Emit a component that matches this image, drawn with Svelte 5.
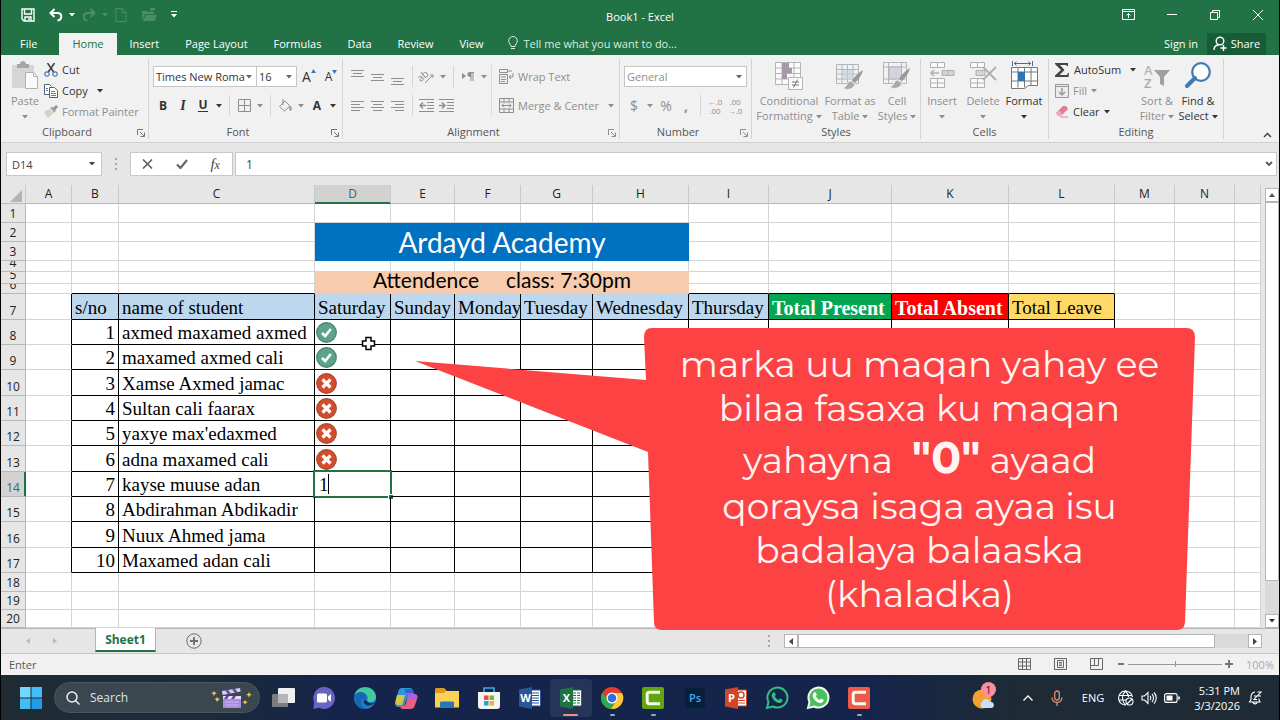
<script>
  const tabs = ["File", "Home", "Insert", "Page Layout", "Formulas", "Data", "Review", "View"];

  const columns = [
    { name: "A", width: 46 },
    { name: "B", width: 47, head: "s/no", tone: "blue" },
    { name: "C", width: 196, head: "name of student", tone: "blue" },
    { name: "D", width: 76, head: "Saturday", tone: "blue" },
    { name: "E", width: 64, head: "Sunday", tone: "blue" },
    { name: "F", width: 66, head: "Monday", tone: "blue" },
    { name: "G", width: 72, head: "Tuesday", tone: "blue" },
    { name: "H", width: 96, head: "Wednesday", tone: "blue" },
    { name: "I", width: 80, head: "Thursday", tone: "blue" },
    { name: "J", width: 123, head: "Total Present", tone: "green" },
    { name: "K", width: 117, head: "Total Absent", tone: "red" },
    { name: "L", width: 106, head: "Total Leave", tone: "gold" },
    { name: "M", width: 60 },
    { name: "N", width: 60 },
    { name: "", width: 0 },
  ];

  const heights = [19, 19, 19, 11, 12, 10, 26, 25, 25, 26, 25, 25, 26, 25, 25, 26, 25, 19, 18, 18];

  const students = [
    { name: "axmed maxamed axmed", mark: "yes" },
    { name: "maxamed axmed cali", mark: "yes" },
    { name: "Xamse Axmed jamac", mark: "no" },
    { name: "Sultan cali faarax", mark: "no" },
    { name: "yaxye max'edaxmed", mark: "no" },
    { name: "adna maxamed cali", mark: "no" },
    { name: "kayse muuse adan", mark: "edit" },
    { name: "Abdirahman Abdikadir" },
    { name: "Nuux Ahmed jama" },
    { name: "Maxamed adan cali" },
  ];

  const apps = [
    "Task view", "Chat", "Edge", "Copilot", "Explorer", "Store", "Word", "Excel",
    "Chrome", "Camtasia", "Photoshop", "PowerPoint", "WhatsApp", "WhatsApp Beta", "Recorder",
  ];

  let cellValue = "1";
  let zoom = 50;

  // D:H is merged over rows 2-3 and 5-6
  function merged(row, col) {
    return col >= 3 && col <= 7 && [2, 3, 5, 6].includes(row);
  }

  function boxed(row, col) {
    return row >= 7 && row <= 17 && col >= 1 && col <= 11;
  }

  function cellClass(row, col) {
    const list = [];
    if (boxed(row, col) || boxed(row, col + 1)) list.push("right");
    if (boxed(row, col) || boxed(row + 1, col)) list.push("bottom");
    if (row === 7 && columns[col].tone) list.push("head", columns[col].tone);
    return list.join(" ");
  }
</script>

{#snippet caret()}
  <svg class="caret" width="6" height="4" viewBox="0 0 6 4"><path d="M0 0h6L3 3.5z" fill="currentColor" /></svg>
{/snippet}

{#snippet launcher()}
  <svg class="launcher" width="8" height="8" viewBox="0 0 8 8" fill="none" stroke="currentColor">
    <path d="M.5 6V.5H6M3 3l4 4M7.500 3.500v4h-4" />
  </svg>
{/snippet}

{#snippet lines(rows, top)}
  <svg width="14" height="16" viewBox="0 0 14 16" stroke="currentColor">
    {#each rows as [x1, x2], i}
      <path d="M{x1} {top + i * 3 + 0.5}H{x2}" />
    {/each}
  </svg>
{/snippet}

{#snippet mark(kind)}
  <svg class="mark" width="21" height="21" viewBox="0 0 21 21">
    {#if kind === "yes"}
      <circle cx="10.500" cy="10.500" r="9.800" fill="#5ba389" stroke="#47806d" stroke-width="1.200" />
      <path d="M6 11l3.200 3 5.600-7" fill="none" stroke="#fff" stroke-width="2.600" />
    {:else}
      <circle cx="10.500" cy="10.500" r="9.800" fill="#d24d2c" stroke="#a8492f" stroke-width="1.200" />
      <path d="M6.500 6.500l8 8M14.500 6.500l-8 8" stroke="#fff" stroke-width="3.200" />
    {/if}
  </svg>
{/snippet}

{#snippet appIcon(name)}
  <svg width="24" height="24" viewBox="0 0 24 24">
    {#if name === "Task view"}
      <rect x="7" y="2" width="17" height="15" rx="1" fill="#eef0f1" />
      <rect x="1" y="8" width="16" height="13" rx="1" fill="#7b7e80" />
      <path d="M7 8h10v9H7z" fill="#b4b6b7" />
    {:else if name === "Chat"}
      <path d="M12 1a11 11 0 1 1-5 20.800L1.500 23 2 16A11 11 0 0 1 12 1z" fill="#6a63c4" />
      <rect x="5" y="7.500" width="10" height="9" rx="1.500" fill="#fff" />
      <path d="M16 10.500l3-2.500v8l-3-2.500z" fill="#fff" />
    {:else if name === "Edge"}
      <circle cx="12" cy="12" r="11" fill="#1b7fd3" />
      <path d="M1.500 9C4-1 22-2 23 11c0 5-6 6-9 4 3-5-3-9-7-8-3 0-5 1-5.500 2z" fill="#43c9a0" />
      <path d="M1.300 10C4 4 13 5 13.500 11c0 1-.7 2-1 3-3-2-5 1-4 4 1 3 4 4.500 6 4.800C7 24 0 18 1.300 10z" fill="#1668b5" />
      <path d="M13 14c2 4 7 4 9 2-2 4-9 5-11 1-1-1.500 0-3 2-3z" fill="#122b56" />
    {:else if name === "Copilot"}
      <path d="M8 2h8c2 0 2.500 1 3 3l1 3h-6l-3 10c-.7 2-1.500 3-4 3H5c-3 0-4.500-2-3.500-5L4 6c.8-2.500 1.700-4 4-4z" fill="#2f95d8" />
      <path d="M3 9l-1.500 6c-.6 3 .5 4 2.500 4h4l3-10z" fill="#d4c644" />
      <path d="M16 3h-6l2 4h8l-.7-2C18.800 3.500 18 3 16 3z" fill="#2868c7" />
      <path d="M14 8h6c3 0 4 2 3 5l-2 6c-.8 2.500-2 4-4.500 4H9c-2 0-2.700-1.500-3-3h3c2 0 2.400-1 3-3z" fill="#e9607c" />
      <path d="M14 8h6c3 0 4 2 3 5h-10z" fill="#b65be0" />
    {:else if name === "Explorer"}
      <path d="M0 3.500C0 2.500.7 2 1.500 2H9l3 3h10.500c.8 0 1.500.7 1.500 1.500V12H0z" fill="#d99b24" />
      <path d="M0 7h9l2-2h13v16.500H0z" fill="#fbd155" />
      <path d="M5 22v-5c0-1 .6-1.500 1.500-1.500h11c1 0 1.500.5 1.500 1.500v5z" fill="#2877b8" />
    {:else if name === "Store"}
      <path d="M7 7V2h10v5" fill="none" stroke="#38aee3" stroke-width="1.600" />
      <path d="M1 6h22v14q0 3-3 3H4q-3 0-3-3z" fill="#f4f4f2" />
      <path d="M7 9.500h4.500V14H7z" fill="#e2562f" />
      <path d="M12.500 9.500H17V14h-4.500z" fill="#78b538" />
      <path d="M7 15h4.500v4.500H7z" fill="#2a9fd8" />
      <path d="M12.500 15H17v4.500h-4.500z" fill="#f0b429" />
    {:else if name === "Word" || name === "Excel" || name === "PowerPoint"}
      {@const tone = name === "Word" ? "#2b579a" : name === "Excel" ? "#207245" : "#d24726"}
      <path d="M12 4h10.500v16H12z" fill="#fff" stroke={tone} />
      {#if name === "PowerPoint"}
        <circle cx="17" cy="9" r="3" fill="none" stroke={tone} stroke-width="1.500" />
        <path d="M14 14.500h7M14 17h7" stroke={tone} />
      {:else}
        <path d="M14 7h7M14 9.500h7M14 12h7M14 14.500h7M14 17h7" stroke={tone} />
        {#if name === "Excel"}<path d="M17.500 5v14" stroke="#fff" />{/if}
      {/if}
      <path d="M1 3.500L14 1v22L1 20.500z" fill={tone} />
      <text x="7.500" y="16" text-anchor="middle" font-size="11" font-weight="700" fill="#fff">{name[0] === "E" ? "X" : name[0]}</text>
    {:else if name === "Chrome"}
      <circle cx="12" cy="12" r="11" fill="#e33b2e" />
      <path d="M2.500 6.500A11 11 0 0 0 11 23l5-9-8 0z" fill="#2da94f" />
      <path d="M22 7H12l4.500 7.500L11 23A11 11 0 0 0 22 7z" fill="#fcc934" />
      <circle cx="12" cy="12" r="5.500" fill="#fff" />
      <circle cx="12" cy="12" r="4.300" fill="#2f6fe0" />
    {:else if name === "Camtasia" || name === "Recorder"}
      <rect x="1" y="1" width="22" height="22" rx="2" fill={name === "Camtasia" ? "#61a60e" : "#f0584c"} />
      <path d="M19 6.200H8.500Q6.200 6.200 6.200 8.500v7q0 2.300 2.300 2.300H19" fill="none" stroke="#f3fbe9" stroke-width="3" />
    {:else if name === "Photoshop"}
      <rect x="2" y="2" width="20" height="20" rx="2" fill="#04203a" />
      <text x="12" y="16" text-anchor="middle" font-size="11" font-weight="600" fill="#42a9f5">Ps</text>
    {:else}
      {@const beta = name === "WhatsApp Beta"}
      <path d="M2 22l1.500-6A10 10 0 1 1 8 20.500z" fill={beta ? "#48c15d" : "#14264d"} stroke={beta ? "#f2f7f2" : "#36bd82"} stroke-width="2" />
      <path d="M8 6.500c1-.7 1.700-.3 2 .5l.8 1.700-1 1.500c1 2 2 3 4 3.800l1.300-1.400 2.400 1.200c.4 2-1.500 3.300-3 3.200C10 16.500 6 12 6.800 8.500z" fill={beta ? "#fff" : "#36bd82"} />
    {/if}
  </svg>
{/snippet}

<div class="screen">
  <header class="titlebar">
    <div class="quick">
      <button class="q save" aria-label="Save">
        <svg width="14" height="14" viewBox="0 0 14 14" fill="none" stroke="#fff" stroke-width="1.400"><path d="M1 1h12v12H3l-2-2zM3.500 1v5h7V1M4 13V9h6v4M8 10v2" /></svg>
      </button>
      <button class="q undo" aria-label="Undo">
        <svg width="14" height="14" viewBox="0 0 14 14" fill="none" stroke="#fff" stroke-width="2"><path d="M5.500 1L1.500 5l4 4M2 5h6.500c5 0 5 7 0 7.500" /></svg>
        <span>{@render caret()}</span>
      </button>
      <button class="q redo dim" aria-label="Redo">
        <svg width="14" height="14" viewBox="0 0 14 14" fill="none" stroke="currentColor" stroke-width="2"><path d="M8.500 1l4 4-4 4M12 5H5.500c-5 0-5 7 0 7.500" /></svg>
        <span>{@render caret()}</span>
      </button>
      <button class="q dim" aria-label="New">
        <svg width="12" height="14" viewBox="0 0 12 14" fill="none" stroke="currentColor"><path d="M1 .5h6L11 4.500v9H1zM7 .5v4h4" /></svg>
      </button>
      <button class="q folder dim" aria-label="Open">
        <svg width="16" height="14" viewBox="0 0 16 14" fill="currentColor"><path d="M1 13V3h5l1 1h6v2H4zM4.500 7H16l-2.500 6H2zM9 0h5v3h-1V1.500L10 4z" /></svg>
      </button>
      <button class="q more" aria-label="Customize">
        <svg width="6" height="7" viewBox="0 0 6 7" fill="#fff"><path d="M0 0h6v1H0zM0 3h6L3 6.500z" /></svg>
      </button>
    </div>
    <h1>Book1 - Excel</h1>
    <div class="window">
      <button aria-label="Ribbon display options">
        <svg width="13" height="11" viewBox="0 0 13 11" fill="none" stroke="#fff"><path d="M.5.5h12v10H.5zM.5 2.500h12M6.500 9V4.500M4.500 6.500l2-2 2 2" /></svg>
      </button>
      <button aria-label="Minimize"><svg width="10" height="10" viewBox="0 0 10 10" stroke="#fff"><path d="M0 4.500h10" /></svg></button>
      <button aria-label="Restore"><svg width="10" height="10" viewBox="0 0 10 10" fill="none" stroke="#fff"><path d="M.5 2.500h7v7h-7zM2.500 2V.5h7v7H8" /></svg></button>
      <button aria-label="Close"><svg width="10" height="10" viewBox="0 0 10 10" stroke="#fff"><path d="M0 0l10 10M10 0L0 10" /></svg></button>
    </div>
  </header>

  <nav class="tabs">
    {#each tabs as tab}
      <button class="tab" class:file={tab === "File"} class:active={tab === "Home"}>{tab}</button>
    {/each}
    <button class="tell">
      <svg width="10" height="14" viewBox="0 0 10 14" fill="none" stroke="#dcecdf"><path d="M3 10.500c0-2-2.300-3-2.300-5.700a4.300 4.300 0 0 1 8.600 0c0 2.700-2.300 3.700-2.300 5.700zM3 12.500h4" /></svg>
      Tell me what you want to do...
    </button>
    <button class="signin">Sign in</button>
    <button class="share">
      <svg width="14" height="15" viewBox="0 0 14 15" fill="none" stroke="#fff" stroke-width="1.400"><circle cx="7" cy="5" r="3.800" /><path d="M1 14c0-3 2-5 5-5.200M7.500 12h6M10.500 9v6" /></svg>
      Share
    </button>
  </nav>

  <section class="ribbon">
    <div class="group">
      <div class="body">
        <button class="big paste off">
          <svg width="28" height="30" viewBox="0 0 28 30"><path d="M1 4h22v23H1z" fill="#d6d5d8" /><path d="M6 3h3c0-4 6-4 6 0h3v4H6z" fill="#a6a6a8" /><path d="M14.500 11.500h8l4 4v12h-12z" fill="#fafafa" stroke="#b2b2b4" /><path d="M22.500 11.500v4h4" fill="none" stroke="#b2b2b4" /></svg>
          <span>Paste</span>
          <span>{@render caret()}</span>
        </button>
        <div class="stack">
          <button class="small">
            <svg width="14" height="14" viewBox="0 0 14 14" fill="none"><path d="M3.500 0L10 9.500M10.500 0L4 9.500" stroke="#444" stroke-width="1.600" /><circle cx="3" cy="11" r="2.200" stroke="#4a7ebb" stroke-width="1.200" /><circle cx="11" cy="11" r="2.200" stroke="#4a7ebb" stroke-width="1.200" /></svg>
            Cut
          </button>
          <button class="small">
            <svg width="14" height="14" viewBox="0 0 14 14" fill="#fff" stroke="#55606b"><path d="M.5.5h5l2 2v8h-7z" /><path d="M5.500 3.500h5l3 3v7h-8z" /><path d="M2 4.500h2M2 6.500h2M7 7.500h4M7 9.500h5M7 11.500h5" stroke="#4a7ebb" /></svg>
            Copy <span class="drop">{@render caret()}</span>
          </button>
          <button class="small off">
            <svg width="14" height="13" viewBox="0 0 14 13"><path d="M0 7l5-3 4 4-5 5z" fill="#d8cfc4" /><path d="M6 3l2-1.500 4 4L10 8z" fill="#aaa" /><path d="M9 3l3-3 2 2-3 3z" fill="#8f8f8f" /></svg>
            Format Painter
          </button>
        </div>
      </div>
      <footer class="wide">Clipboard {@render launcher()}</footer>
    </div>

    <div class="group">
      <div class="body two">
        <div class="row">
          <label class="combo font"><select aria-label="Font"><option>Times New Roma</option></select>{@render caret()}</label>
          <label class="combo size"><select aria-label="Font size"><option>16</option></select>{@render caret()}</label>
          <button class="t24 grow" aria-label="Increase font size">A<svg width="5" height="4" viewBox="0 0 5 4"><path d="M0 4h5L2.500 0z" fill="#3b78b8" /></svg></button>
          <button class="t20 shrink" aria-label="Decrease font size">A<svg width="5" height="4" viewBox="0 0 5 4"><path d="M0 0h5L2.500 4z" fill="#3b78b8" /></svg></button>
        </div>
        <div class="row marks">
          <button class="t20"><b>B</b></button>
          <button class="t20 italic"><b>I</b></button>
          <button class="t20 under"><b>U</b></button>
          <button class="t12" aria-label="Underline options">{@render caret()}</button>
          <i class="sep"></i>
          <button class="t20 off" aria-label="Borders"><svg width="13" height="13" viewBox="0 0 13 13" fill="none" stroke="currentColor"><path d="M.5.5h12v12H.5zM6.500 0v13M0 6.500h13" /></svg></button>
          <button class="t12 off" aria-label="Border options">{@render caret()}</button>
          <i class="sep"></i>
          <button class="t20 off" aria-label="Fill color"><svg width="14" height="14" viewBox="0 0 14 14" fill="none" stroke="currentColor"><path d="M1.500 7.500L7 2l5 5-5.500 5zM5 0v6" /><path d="M12.500 7.500v4" stroke-width="2" /></svg></button>
          <button class="t12 off" aria-label="Fill options">{@render caret()}</button>
          <button class="t20"><b>A</b></button>
          <button class="t12" aria-label="Font color options">{@render caret()}</button>
        </div>
      </div>
      <footer class="wide">Font {@render launcher()}</footer>
    </div>

    <div class="group">
      <div class="body off">
        <div class="align">
          <div class="row">
            <button class="t20" aria-label="Top align">{@render lines([[0, 13], [2, 11], [0, 13]], 1)}</button>
            <button class="t20" aria-label="Middle align">{@render lines([[0, 13], [2, 11], [0, 13]], 5)}</button>
            <button class="t20" aria-label="Bottom align">{@render lines([[0, 13], [2, 11], [0, 13]], 9)}</button>
            <i class="sep"></i>
            <button class="t20" aria-label="Orientation"><svg class="tilt" width="16" height="15" viewBox="0 0 16 15"><text x="0" y="11" font-size="10" transform="rotate(-40 4 10)" fill="currentColor">ab</text><path d="M6 14l8-8M14 9V6h-3" fill="none" stroke="currentColor" /></svg></button>
            <button class="t12" aria-label="Orientation options">{@render caret()}</button>
            <i class="sep"></i>
            <button class="t20" aria-label="Text direction"><svg width="12" height="9" viewBox="0 0 12 9" fill="currentColor"><path d="M0 1l4 3-4 3zM8 0h4v1h-.5v8h-1V1h-1v8h-1V5C4.500 5 4.500 0 8 0z" /></svg></button>
            <button class="t12" aria-label="Direction options">{@render caret()}</button>
          </div>
          <div class="row">
            <button class="t20" aria-label="Align left">{@render lines([[0, 13], [0, 9], [0, 13], [0, 9]], 3)}</button>
            <button class="t20" aria-label="Center">{@render lines([[0, 13], [2, 11], [0, 13], [2, 11]], 3)}</button>
            <button class="t20" aria-label="Align right">{@render lines([[0, 13], [4, 13], [0, 13], [4, 13]], 3)}</button>
            <i class="sep"></i>
            <button class="t20" aria-label="Decrease indent"><svg width="16" height="14" viewBox="0 0 16 14" fill="none" stroke="currentColor"><path d="M0 .5h15M8 3.500h7M8 6.500h7M8 9.500h7M0 12.500h15" /><path d="M7 6.500H1M4 3.500l-3 3 3 3" stroke-width="1.500" /></svg></button>
            <button class="t20" aria-label="Increase indent"><svg width="16" height="14" viewBox="0 0 16 14" fill="none" stroke="currentColor"><path d="M0 .5h15M8 3.500h7M8 6.500h7M8 9.500h7M0 12.500h15" /><path d="M0 6.500h6M3 3.500l3 3-3 3" stroke-width="1.500" /></svg></button>
          </div>
        </div>
        <div class="wrap">
          <button class="small">
            <svg width="15" height="15" viewBox="0 0 15 15" fill="none" stroke="currentColor"><path d="M.5.5h8v3h-8zM9 2h4M.5 5.500h8v9h-8zM2 8h5M2 10.500h5M2 12.500h4M14 4v4h-4M12 6l-2 2 2 2" /></svg>
            Wrap Text
          </button>
          <button class="small">
            <svg width="15" height="15" viewBox="0 0 15 15" fill="none" stroke="currentColor"><path d="M.5.5h14v14H.5zM.5 4h14M.5 11h14M5 .5V4M10 .5V4M5 11v3.500M10 11v3.500M3 7.500h9M5 5.500l-2 2 2 2M10 5.500l2 2-2 2" /></svg>
            Merge &amp; Center <span class="drop">{@render caret()}</span>
          </button>
        </div>
      </div>
      <footer class="wide">Alignment <span class="off">{@render launcher()}</span></footer>
    </div>

    <div class="group">
      <div class="body two off">
        <div class="row">
          <label class="combo number"><select aria-label="Number format"><option>General</option></select>{@render caret()}</label>
        </div>
        <div class="row signs">
          <button class="t20">$</button>
          <button class="t12" aria-label="Currency options">{@render caret()}</button>
          <button class="t20">%</button>
          <button class="t20"><b>,</b></button>
          <i class="sep"></i>
          <button class="t20 dec"><span>←.0</span><span>.00</span></button>
          <button class="t20 dec"><span>.00</span><span>→.0</span></button>
        </div>
      </div>
      <footer class="wide">Number <span class="off">{@render launcher()}</span></footer>
    </div>

    <div class="group">
      <div class="body off">
        <button class="big cond">
          <svg width="28" height="30" viewBox="0 0 28 30" fill="#fafafa" stroke="#b5b5b7"><path d="M.5 1.500h25v22H.5zM.5 7h25M.5 12.500h25M.5 18h25M7 1.500v22M19 1.500v22" /><path d="M7 2h7v5H7zM7 7h10v5H7zM7 12.500h5V18H7z" fill="#a596a8" stroke="none" /><path d="M13.500 16.500h14v12h-14z" /><path d="M17 21h7M17 24h7M22.500 18.500l-4 8" stroke="#777" /></svg>
          <span>Conditional</span><span>Formatting {@render caret()}</span>
        </button>
        <button class="big fmt">
          <svg width="28" height="30" viewBox="0 0 28 30" fill="none" stroke="#b5b5b7"><path d="M.5 3.500h22v19H.5zM.5 8.500h22M.5 13h22M.5 18h22M6 3.500v19M11.500 3.500v19M17 3.500v19" /><path d="M6 9h11v9H6z" fill="#c5d0da" opacity=".6" stroke="none" /><path d="M27 9c-5 3-9 7-11 11l3 2c3-3 7-8 8-13z" fill="#999" stroke="none" /><path d="M15 20c-4 0-3 5-8 7 4 3 11 1 12-4z" fill="#a9a9ab" stroke="#eee" /></svg>
          <span>Format as</span><span>Table {@render caret()}</span>
        </button>
        <button class="big styles">
          <svg width="28" height="30" viewBox="0 0 28 30" fill="none" stroke="#b5b5b7"><path d="M.5 1.500h23v21H.5zM.5 6h23M5.500 1.500v21M18.500 1.500v21M.5 18h23" /><path d="M6 6h12.500v12H6z" fill="#d5d3dc" /><path d="M27 7c-5 3-9 7-11 11l3 2c3-3 7-8 8-13z" fill="#999" stroke="none" /><path d="M15 19c-4 0-3 5-8 7 4 3 11 1 12-4z" fill="#a9a9ab" stroke="#eee" /></svg>
          <span>Cell</span><span>Styles {@render caret()}</span>
        </button>
      </div>
      <footer>Styles</footer>
    </div>

    <div class="group">
      <div class="body">
        <button class="big cell off">
          <svg width="26" height="30" viewBox="0 0 26 30" fill="#fafafa" stroke="#b0b0b2"><path d="M1.500 1.500h14v5h-14zM8.500 1.500v5M1.500 17.500h14v9h-14zM8.500 17.500v9M1.500 22h14" /><path d="M13 9.500h12v5H13zM19 9.500v5" fill="#d4d4d6" /><path d="M10 12H2M5 9l-3 3 3 3" fill="none" stroke-width="1.500" /></svg>
          <span>Insert</span><span>{@render caret()}</span>
        </button>
        <button class="big cell off">
          <svg width="28" height="30" viewBox="0 0 28 30" fill="#fafafa" stroke="#b0b0b2"><path d="M1.500 1.500h14v5h-14zM8.500 1.500v5M1.500 17.500h14v9h-14zM8.500 17.500v9M1.500 22h14" /><path d="M7 9.500h9v5H7z" fill="#d4d4d6" /><path d="M14 6l13 13M27 6L14 19" stroke-width="2" /></svg>
          <span>Delete</span><span>{@render caret()}</span>
        </button>
        <button class="big cell">
          <svg width="28" height="30" viewBox="0 0 28 30" fill="#fff" stroke="#777"><path d="M1.500 6.500h26v18l-9 0-4 3H1.500zM1.500 11h26M1.500 20h26M8 6.500v20M14.500 6.500v20M21 6.500v18" /><path d="M8 11h7v9H8z" fill="#2e75b6" stroke="none" /><path d="M2.500 0v5M22.500 0v5M4 2.500h17M6.500.5l-2 2 2 2M18.500.5l2 2-2 2" stroke="#2e75b6" fill="none" /></svg>
          <span>Format</span><span>{@render caret()}</span>
        </button>
      </div>
      <footer>Cells</footer>
    </div>

    <div class="group">
      <div class="body">
        <div class="stack edit">
          <button class="small">
            <svg width="15" height="14" viewBox="0 0 15 14"><path d="M0 0h13v3h-1L11 2H5l4.500 5L4.500 12H12l1-2h1l-.5 4H0v-1.500L6 7 0 1z" fill="#444" /></svg>
            AutoSum <span class="drop">{@render caret()}</span>
          </button>
          <button class="small off">
            <svg width="14" height="14" viewBox="0 0 14 14" fill="none" stroke="#999"><path d="M.5.5h13v13H.5z" fill="#ececee" /><path d="M.5 2.500h13" /><path d="M7 4v7M4 8l3 3 3-3" stroke-width="1.500" /></svg>
            Fill {@render caret()}
          </button>
          <button class="small">
            <svg width="14" height="13" viewBox="0 0 14 13"><path d="M1 8l7-7h3l2 3-7 7H3z" fill="#e27c94" /><path d="M1 8l3-3 3.500 4.500L6 11H3z" fill="#efabb9" /><path d="M5 12h8" stroke="#e27c94" /></svg>
            Clear {@render caret()}
          </button>
        </div>
        <button class="big sort off">
          <svg width="28" height="30" viewBox="0 0 28 30"><text x="1" y="14" font-size="13" font-weight="600" fill="#a9b9c8">A</text><text x="1" y="27" font-size="13" font-weight="600" fill="#a9a9ab">Z</text><path d="M11 9h16l-6 7v9l-4-2v-7z" fill="#a0a0a2" /></svg>
          <span>Sort &amp;</span><span>Filter {@render caret()}</span>
        </button>
        <button class="big find">
          <svg width="28" height="30" viewBox="0 0 28 30"><circle cx="17" cy="11" r="8.800" fill="#fff" stroke="#3f7ab5" stroke-width="2.200" /><path d="M11 17l-8 8" stroke="#3f7ab5" stroke-width="4" stroke-linecap="round" /></svg>
          <span>Find &amp;</span><span>Select {@render caret()}</span>
        </button>
      </div>
      <footer>Editing</footer>
    </div>
    <button class="collapse" aria-label="Collapse ribbon">
      <svg width="9" height="6" viewBox="0 0 9 6" fill="none" stroke="#444" stroke-width="1.500"><path d="M1 5l3.500-3.500L8 5" /></svg>
    </button>
  </section>

  <div class="formula">
    <label class="namebox"><input aria-label="Name box" value="D14" />{@render caret()}</label>
    <span class="grip"></span>
    <div class="fx">
      <button aria-label="Cancel"><svg width="11" height="10" viewBox="0 0 11 10" stroke="#666" stroke-width="1.700"><path d="M1 0.500l9 9M10 .5L1 9.500" /></svg></button>
      <button aria-label="Enter"><svg width="12" height="10" viewBox="0 0 12 10" fill="none" stroke="#666" stroke-width="2.200"><path d="M1 5.500L4.500 9 11 1" /></svg></button>
      <button class="fn"><i>f<small>x</small></i></button>
    </div>
    <label class="entry">
      <input aria-label="Formula bar" bind:value={cellValue} />
      <svg width="8" height="6" viewBox="0 0 8 6" fill="none" stroke="#555" stroke-width="1.800"><path d="M1 1l3 3 3-3" /></svg>
    </label>
  </div>

  <main class="sheet">
    <table>
      <colgroup>
        <col class="rowcol" />
        {#each columns as column}
          <col style:width={column.width ? column.width + "px" : "auto"} />
        {/each}
      </colgroup>
      <thead>
        <tr>
          <th class="corner"><svg width="12" height="12" viewBox="0 0 12 12"><path d="M12 0v12H0z" fill="#b4b4b4" /></svg></th>
          {#each columns as column}
            <th class:picked={column.name === "D"}>{column.name}</th>
          {/each}
        </tr>
      </thead>
      <tbody>
        {#each heights as height, i}
          {@const row = i + 1}
          {@const student = students[row - 8]}
          <tr>
            <th class:picked={row === 14}><div class="num" style:height={height - 1 + "px"}>{row}</div></th>
            {#each columns as column, col}
              {#if merged(row, col)}
                {#if col === 3 && row === 2}
                  <td class="title" colspan="5" rowspan="2">Ardayd Academy</td>
                {:else if col === 3 && row === 5}
                  <td class="subtitle" colspan="5" rowspan="2">Attendence     class: 7:30pm</td>
                {/if}
              {:else}
                <td class={cellClass(row, col)}>
                  {#if row === 7 && column.head}
                    <div class="text">{column.head}</div>
                  {:else if student && col === 1}
                    <div class="text index">{row - 7}</div>
                  {:else if student && col === 2}
                    <div class="text">{student.name}</div>
                  {:else if col === 3 && student?.mark === "edit"}
                    <div class="editing">{cellValue}</div>
                  {:else if col === 3 && student?.mark}
                    {@render mark(student.mark)}
                  {/if}
                </td>
              {/if}
            {/each}
          </tr>
        {/each}
      </tbody>
    </table>
    <div class="vscroll">
      <button aria-label="Scroll up"><svg width="6" height="4" viewBox="0 0 6 4"><path d="M0 4h6L3 0z" fill="#555" /></svg></button>
      <span class="thumb"></span>
      <button class="down" aria-label="Scroll down">{@render caret()}</button>
    </div>
    <svg class="pointer" width="15" height="15" viewBox="0 0 15 15"><path d="M5 1.500h5V5h3.500v5H10v3.500H5V10H1.500V5H5z" fill="#fff" stroke="#000" stroke-width="1.500" /></svg>
  </main>

  <div class="sheettabs">
    <div class="nav">
      <button aria-label="Previous sheet"><svg width="4" height="6" viewBox="0 0 4 6"><path d="M4 0v6L0 3z" fill="#b9b9b9" /></svg></button>
      <button aria-label="Next sheet"><svg width="4" height="6" viewBox="0 0 4 6"><path d="M0 0v6l4-3z" fill="#b9b9b9" /></svg></button>
    </div>
    <button class="sheettab">Sheet1</button>
    <button class="add" aria-label="New sheet"><svg width="16" height="16" viewBox="0 0 16 16" fill="none" stroke="#6c6c6c"><circle cx="8" cy="8" r="7.200" /><path d="M4 8h8M8 4v8" stroke-width="1.800" /></svg></button>
    <span class="grip"></span>
    <div class="hscroll">
      <button aria-label="Scroll left"><svg width="4" height="7" viewBox="0 0 4 7"><path d="M4 0v7L0 3.500z" fill="#444" /></svg></button>
      <span class="thumb"></span>
      <button class="next" aria-label="Scroll right"><svg width="4" height="7" viewBox="0 0 4 7"><path d="M0 0v7l4-3.500z" fill="#444" /></svg></button>
    </div>
  </div>

  <div class="status">
    <span class="mode">Enter</span>
    <button aria-label="Normal view"><svg width="13" height="12" viewBox="0 0 13 12" fill="none" stroke="#666"><path d="M.5.5h12v11H.5zM.5 4h12M.5 8h12M4.500.5v11M8.500.5v11" /></svg></button>
    <button aria-label="Page layout view"><svg width="13" height="12" viewBox="0 0 13 12" fill="none" stroke="#666"><path d="M.5.5h12v11H.5zM3.500 2.500h6v7h-6zM5 4.500h3M5 6h3M5 7.500h3" /></svg></button>
    <button aria-label="Page break view"><svg width="13" height="12" viewBox="0 0 13 12" fill="none" stroke="#666"><path d="M.5.5h12v11H.5zM4.500.5v7h4v-7M.5 7.500h4" /></svg></button>
    <button class="step" aria-label="Zoom out"><svg width="6" height="6" viewBox="0 0 6 6" stroke="#777" stroke-width="2"><path d="M0 3h6" /></svg></button>
    <input type="range" aria-label="Zoom" bind:value={zoom} />
    <button class="step" aria-label="Zoom in"><svg width="8" height="8" viewBox="0 0 8 8" stroke="#777" stroke-width="2"><path d="M0 4h8M4 0v8" /></svg></button>
    <span class="percent">100%</span>
  </div>

  <footer class="taskbar">
    <button class="start" aria-label="Start"><svg width="22" height="22" viewBox="0 0 22 22" fill="#43bdf5"><path d="M0 0h10.500v10.500H0z" fill="#71d7fb" /><path d="M11.500 0H22v10.500H11.500zM0 11.500h10.500V22H0z" /><path d="M11.500 11.500H22V22H11.500z" fill="#239ce8" /></svg></button>
    <label class="search">
      <svg width="14" height="14" viewBox="0 0 14 14" fill="none" stroke="#e8ecee" stroke-width="1.500"><circle cx="6" cy="6" r="5" /><path d="M9.500 9.500l4 4" /></svg>
      <input placeholder="Search" aria-label="Search" />
      <svg width="42" height="22" viewBox="0 0 42 22"><path d="M12 9h18v12H12z" fill="#a98be0" /><path d="M11 4l18-3 .6 3.500L11.600 8z" fill="#d9cdf5" /><path d="M14 3.500l3 3.500 3-.500-3-3.500zM21 2.400l3 3.500 3-.500-3-3.500z" fill="#5f4697" /><path d="M12 9h18v3H12z" fill="#e4daf8" /><path d="M15 9h3l-2 3h-3zM22 9h3l-2 3h-3z" fill="#5f4697" /><path d="M14 15h14M14 18h14" stroke="#c9b6f0" /><path d="M3 4l1 1.500 2 .5-2 1-1 2-1-2-2-1 2-.5zM6 10l1 1.500 2 .5-1.500 1L6 15l-1-2-1.500-1 1.500-.5zM38 5l1 2 2 .5-2 1-1 2-1-2-2-1 2-.5zM34 13l1 1.500 2 .5-2 1-1 1.500-1-1.500-1.500-1 1.500-.5z" fill="#f2c14e" /></svg>
    </label>
    <div class="apps">
      {#each apps as app}
        <button
          class:current={app === "Excel"}
          class:open={["Chrome", "Camtasia", "Recorder"].includes(app)}
          aria-label={app}
        >
          {@render appIcon(app)}
        </button>
      {/each}
    </div>
    <div class="tray">
      <button class="weather" aria-label="Weather">
        <svg width="24" height="22" viewBox="0 0 24 22"><circle cx="10" cy="12" r="9.500" fill="#f3a12f" /><path d="M10 21a4 4 0 0 1 0-6c1-4 7-4 8 0 5-1 5 6 1 6z" fill="#c8e0f8" /></svg>
        <span class="badge">1</span>
      </button>
      <button class="w36" aria-label="Hidden icons"><svg width="10" height="6" viewBox="0 0 10 6" fill="none" stroke="#fff" stroke-width="1.300"><path d="M.5 5.500L5 1l4.500 4.500" /></svg></button>
      <button class="w24" aria-label="Microphone"><svg width="12" height="16" viewBox="0 0 12 16" fill="none" stroke="#dd8d72" stroke-width="1.300"><rect x="3.700" y="1" width="4.600" height="9" rx="2.300" /><path d="M1 7.500c0 6.500 10 6.500 10 0M6 12.500V16" /></svg></button>
      <button class="lang">ENG</button>
      <button class="net" aria-label="Network, volume and battery">
        <svg width="16" height="16" viewBox="0 0 16 16" fill="none" stroke="#fff" stroke-width="1.100"><path d="M14.500 7A7 7 0 1 0 8 15M1 5.500h13M1 10h7M7.500 1c-4 4-4 10 0 14M7.500 1c2 2 3 4 3 6" /><circle cx="11.500" cy="11.500" r="3.500" /><path d="M9 14l5-5" /></svg>
        <svg width="16" height="14" viewBox="0 0 16 14" fill="none" stroke="#fff" stroke-width="1.100"><path d="M1 5v4h2.500L7 12.500v-11L3.500 5zM9 5c1 1 1 3 0 4M11 3c2 2 2 6 0 8M13 1.500c3 3 3 8 0 11" /></svg>
        <svg width="16" height="10" viewBox="0 0 16 10" fill="none" stroke="#fff" stroke-width="1.100"><rect x=".6" y=".6" width="12.500" height="8.800" rx="2" /><path d="M3 3h5v4H3z" fill="#fff" /><path d="M15 3.500v3" stroke-width="1.600" /></svg>
      </button>
      <button class="clock"><span>5:31 PM</span><span>3/3/2026</span></button>
      <button class="bell" aria-label="Notifications"><svg width="14" height="14" viewBox="0 0 14 14" fill="none" stroke="#fff" stroke-width="1.100"><path d="M7 1C4 1.500 3 3.500 3 6v2.500L1.500 11H12l-1-2V7.500M5 11c0 2.500 4 2.500 4 0M9.500 1h3.500l-3.500 4H13M6 5h3L6 8.500h3" /></svg></button>
    </div>
  </footer>

  <aside class="callout">
    <svg viewBox="0 0 780 302" preserveAspectRatio="none">
      <path d="M237 0H772Q781 0 781 9L771 294Q770.500 302 763 302H248Q240 302 240 294L234 124 1 33 232 52 230 9Q230 0 238 0z" fill="#fc4242" />
    </svg>
    <p>
      marka uu maqan yahay ee<br />
      bilaa fasaxa ku maqan<br />
      yahayna &nbsp;<strong>"0"</strong> ayaad<br />
      qoraysa isaga ayaa isu<br />
      badalaya balaaska<br />
      (khaladka)
    </p>
  </aside>
</div>

<style>
  :global(body) {
    background: #000;
  }

  .screen {
    --line: #d4d4d4;
    position: relative;
    display: flex;
    flex-direction: column;
    min-height: 100vh;
    box-sizing: border-box;
    border: 0 solid #000;
    border-width: 0 1px;
    overflow: hidden;
    background: #e6e6e6;
    color: #333;
    font-family: "Open Sans", "Noto Sans", sans-serif;
    font-size: 11px;
  }

  button,
  input,
  select {
    margin: 0;
    padding: 0;
    border: 0;
    background: none;
    color: inherit;
    font: inherit;
  }

  button {
    display: flex;
    align-items: center;
    justify-content: center;
  }

  svg {
    flex: none;
  }

  .titlebar {
    display: grid;
    grid-template-columns: 1fr auto 1fr;
    align-items: center;
    height: 33px;
    background: #217346;
    color: #fff;
  }

  .quick {
    display: flex;
    align-items: center;
    gap: 7px;
    height: 28px;
    padding: 0 0 4px 20px;
  }

  .q {
    gap: 6px;
    color: #fff;
  }

  .q span {
    display: flex;
  }

  .undo,
  .folder,
  .more {
    margin-left: 7px;
  }

  .dim {
    color: #4b8d66;
  }

  h1 {
    margin: 0;
    font-size: 11px;
    font-weight: 400;
  }

  .window {
    display: flex;
    justify-content: flex-end;
    height: 28px;
    padding-bottom: 4px;
  }

  .window button {
    width: 43px;
  }

  .tabs {
    display: flex;
    height: 22px;
    background: #217346;
    color: #fff;
  }

  .tabs button {
    padding-bottom: 2px;
  }

  .tab {
    padding: 0 13px;
  }

  .tabs .file {
    padding: 0 22px 2px 19px;
  }

  .active {
    background: #f1f1f1;
    color: #217346;
  }

  .tell {
    gap: 6px;
    padding-left: 11px;
    color: #dcecdf;
  }

  .signin {
    margin-left: auto;
    padding: 0 9px;
  }

  .share {
    gap: 4px;
    width: 59px;
    margin-right: 13px;
    background: #185c37;
  }

  .ribbon {
    display: grid;
    grid-template-columns: 148px 194px 277px 132px 169px 128px 175px 1fr;
    height: 87px;
    border-bottom: 1px solid #d0d0d0;
    background: #f1f1f1;
  }

  .group {
    display: flex;
    flex-direction: column;
    margin: 4px 0;
    border-right: 1px solid #d4d4d4;
  }

  .body {
    display: flex;
    flex: 1;
  }

  .group footer {
    position: relative;
    line-height: 14px;
    text-align: center;
    color: #555;
  }

  .group .wide {
    padding-right: 15px;
  }

  .launcher {
    position: absolute;
    right: 3px;
    bottom: 2px;
    color: #777;
  }

  .off,
  .off .launcher {
    color: #8e8e8e;
  }

  .two {
    flex-direction: column;
    gap: 8px;
    padding: 7px 0 0 4px;
  }

  .row {
    display: flex;
    align-items: center;
    height: 21px;
  }

  .marks {
    font-size: 12px;
  }

  .stack {
    padding-left: 4px;
  }

  .small {
    gap: 4px;
    height: 21px;
    white-space: nowrap;
  }

  .drop {
    display: flex;
    margin-left: 5px;
  }

  .big {
    flex-direction: column;
    justify-content: flex-start;
    padding-top: 2px;
    line-height: 15px;
    white-space: nowrap;
  }

  .big > svg {
    margin-bottom: 2px;
  }

  .big .caret {
    vertical-align: middle;
  }

  .paste {
    width: 30px;
    margin-left: 9px;
  }

  .cond {
    width: 74px;
  }

  .fmt {
    width: 48px;
  }

  .styles {
    width: 46px;
  }

  .cell {
    width: 40px;
    margin-left: 1px;
  }

  .edit {
    width: 81px;
    padding-left: 6px;
  }

  .sort {
    width: 42px;
  }

  .find {
    width: 40px;
  }

  .t20 {
    width: 20px;
  }

  .t24 {
    width: 24px;
  }

  .t12 {
    width: 12px;
  }

  .tilt {
    overflow: visible;
  }

  .sep {
    width: 1px;
    height: 21px;
    margin: 0 4px;
    background: #d4d4d4;
  }

  .italic {
    font-family: "Liberation Serif", serif;
    font-size: 14px;
    font-style: italic;
  }

  .under b {
    border-bottom: 1px solid;
    line-height: 12px;
  }

  .grow {
    font-size: 14px;
  }

  .shrink {
    font-size: 12px;
  }

  .grow svg,
  .shrink svg {
    align-self: flex-start;
    margin-top: 2px;
  }

  .combo {
    position: relative;
    display: flex;
    align-items: center;
    box-sizing: border-box;
    height: 21px;
    border: 1px solid #c6c6c6;
    background: #fff;
  }

  .combo select {
    width: 100%;
    height: 19px;
    padding-left: 2px;
    appearance: none;
    opacity: 1;
  }

  .combo .caret {
    position: absolute;
    right: 4px;
    color: #666;
  }

  .combo.font {
    width: 104px;
  }

  .combo.size {
    width: 41px;
    margin-left: -1px;
  }

  .combo.number {
    width: 123px;
  }

  .align {
    display: flex;
    flex-direction: column;
    gap: 8px;
    width: 149px;
    margin: 6px 0 9px;
    padding: 1px 0 0 5px;
    box-sizing: border-box;
    border-right: 1px solid #dcdcdc;
  }

  .wrap {
    display: flex;
    flex-direction: column;
    align-items: flex-start;
    gap: 8px;
    padding: 7px 0 0 7px;
  }

  .signs {
    font-size: 14px;
  }

  .dec {
    flex-direction: column;
    font-size: 8px;
    line-height: 9px;
  }

  .collapse {
    align-self: end;
    justify-self: end;
    width: 24px;
    height: 16px;
  }

  .formula {
    display: flex;
    align-items: center;
    height: 24px;
    padding: 9px 2px 9px 5px;
  }

  .namebox,
  .fx,
  .entry {
    display: flex;
    align-items: center;
    box-sizing: border-box;
    height: 24px;
    border: 1px solid #c8c8c8;
    background: #fff;
    color: #444;
  }

  .namebox {
    width: 96px;
    padding: 0 6px 0 5px;
  }

  .namebox input {
    flex: 1;
    min-width: 0;
  }

  .grip {
    width: 2px;
    height: 12px;
    background: repeating-linear-gradient(#a6a6a6 0 2px, transparent 2px 5px);
  }

  .formula .grip {
    margin: 0 13px;
  }

  .fx {
    width: 103px;
    margin-right: 2px;
  }

  .fx button {
    flex: 1;
  }

  .fn {
    font-family: "Liberation Serif", serif;
    font-size: 15px;
  }

  .fn small {
    font-size: 12px;
  }

  .entry {
    flex: 1;
    padding: 0 3px 0 10px;
  }

  .entry input {
    flex: 1;
    font-size: 12px;
  }

  .sheet {
    position: relative;
    display: flex;
    flex: 1;
  }

  table {
    flex: 1;
    width: 0;
    table-layout: fixed;
    border-collapse: separate;
    border-spacing: 0;
    background: #fff;
  }

  .rowcol {
    width: 25px;
  }

  th,
  td {
    padding: 0;
    border: 0 solid var(--line);
    border-width: 0 1px 1px 0;
  }

  th {
    background: #e6e6e6;
    border-color: #b8b8b8;
    color: #222;
    font-size: 12px;
    font-weight: 400;
  }

  thead th {
    height: 18px;
    border-right-color: #c9c9c9;
    line-height: 18px;
  }

  .corner svg {
    display: block;
    margin: 3px 0 0 9px;
  }

  .picked {
    background: #d2d2d2;
    color: #3f6b52;
  }

  thead .picked {
    box-shadow: inset 0 -1px #217346;
    border-bottom-color: #217346;
  }

  tbody .picked {
    box-shadow: inset -1px 0 #217346;
    border-right-color: #217346;
  }

  .num {
    display: flex;
    align-items: flex-end;
    justify-content: center;
    overflow: hidden;
    line-height: 16px;
  }

  td {
    position: relative;
    padding-left: 3px;
    overflow: hidden;
    color: #000;
    font-family: "Liberation Serif", serif;
    font-size: 19px;
    line-height: 22px;
    white-space: nowrap;
  }

  .text {
    padding-top: 2px;
  }

  .right {
    border-right-color: #000;
  }

  .bottom {
    border-bottom-color: #000;
  }

  .blue {
    background: #bdd7ee;
  }

  .green,
  .red {
    color: #fff;
    font-size: 20px;
    font-weight: 700;
  }

  .green {
    background: #00a651;
  }

  .red {
    background: #f00;
  }

  .gold {
    background: #ffd966;
  }

  .title,
  .subtitle {
    padding: 0;
    border: 0;
    font-family: Lato, sans-serif;
    text-align: center;
    white-space: pre;
  }

  .title {
    background: #0070c0;
    color: #fff;
    font-size: 28px;
    line-height: 36px;
  }

  .subtitle {
    background: #f8cbad;
    font-size: 21px;
    line-height: 16px;
    vertical-align: top;
  }

  .index {
    padding-right: 3px;
    text-align: right;
  }

  .mark {
    display: block;
    margin: 1px 0 0 -2px;
  }

  td:has(.editing) {
    overflow: visible;
  }

  .editing {
    position: absolute;
    inset: -2px -2px -2px -2px;
    padding-left: 4px;
    border: 2px solid #217346;
    background: linear-gradient(#000, #000) 13px 2px / 1px 20px no-repeat #fff;
    line-height: 25px;
  }

  .editing::after {
    content: "";
    position: absolute;
    right: -3px;
    bottom: -3px;
    width: 4px;
    height: 4px;
    border: solid #fff;
    border-width: 1px 0 0 1px;
    background: #217346;
  }

  .vscroll {
    display: flex;
    flex-direction: column;
    width: 14px;
    padding: 3px 0 0 4px;
    background: linear-gradient(#dadada, #dadada) 4px 3px no-repeat;
  }

  .vscroll button,
  .hscroll button {
    box-sizing: border-box;
    width: 14px;
    height: 14px;
    border: 1px solid #b5b5b5;
    background: #fff;
  }

  .vscroll .thumb {
    flex: 1;
    margin-bottom: 33px;
    border: 1px solid #b5b5b5;
    background: #fff;
  }

  .pointer {
    position: absolute;
    left: 360px;
    top: 151px;
  }

  .sheettabs {
    display: flex;
    align-items: center;
    height: 24px;
    border-top: 1px solid #b5b5b5;
    border-bottom: 1px solid #c8c8c8;
  }

  .nav {
    display: flex;
    width: 94px;
  }

  .nav button {
    width: 27px;
  }

  .nav button:first-child {
    margin-left: 13px;
  }

  .sheettab {
    align-self: flex-start;
    box-sizing: border-box;
    width: 61px;
    height: 24px;
    margin-top: -1px;
    border: 1px solid #b5b5b5;
    border-width: 0 1px 2px;
    border-bottom-color: #217346;
    background: #fff;
    color: #217346;
    font-size: 12px;
    font-weight: 700;
  }

  .add {
    margin-left: 30px;
  }

  .sheettabs .grip {
    margin-left: auto;
  }

  .hscroll {
    display: flex;
    flex: 0 1 478px;
    margin: 0 17px 0 14px;
    background: #dadada;
  }

  .hscroll .thumb {
    flex: 1;
    margin-right: 33px;
    border: 1px solid #b5b5b5;
    background: #fff;
  }

  .status {
    display: flex;
    align-items: center;
    height: 20px;
    padding: 0 5px 1px 8px;
    background: #f1f1f1;
    color: #555;
  }

  .mode {
    margin-right: auto;
  }

  .status > button {
    width: 36px;
  }

  .status .step {
    width: 14px;
  }

  .percent {
    margin-left: 10px;
    color: #aaa;
  }

  input[type="range"] {
    width: 94px;
    height: 12px;
    appearance: none;
    background: linear-gradient(#999, #999) center / 100% 1px no-repeat;
  }

  input[type="range"]::-webkit-slider-thumb {
    width: 1px;
    height: 6px;
    appearance: none;
    background: #999;
  }

  .taskbar {
    display: flex;
    align-items: center;
    height: 45px;
    background: linear-gradient(90deg, #1f2c34, #1c2a3a 16%, #15244a 26%, #15244a 68%, #1e2b35 80%);
    color: #fff;
  }

  .start {
    width: 60px;
  }

  .search {
    display: flex;
    align-items: center;
    gap: 10px;
    box-sizing: border-box;
    width: 206px;
    height: 31px;
    margin-left: -7px;
    padding: 0 6px 0 11px;
    border: 1px solid #4a555c;
    border-radius: 16px;
    background: #3b474f;
    font-size: 12px;
  }

  .search input {
    flex: 1;
    min-width: 0;
  }

  .search input::placeholder {
    color: #dfe3e5;
    opacity: 1;
  }

  .apps {
    display: grid;
    grid-template-columns: repeat(15, 1fr);
    width: 618px;
    margin-left: 2px;
  }

  .apps button {
    position: relative;
    height: 38px;
  }

  .current {
    border-radius: 4px;
    background: #26345a;
  }

  .current::after,
  .open::after {
    content: "";
    position: absolute;
    bottom: 1px;
    width: 5px;
    height: 2px;
    border-radius: 1px;
    background: #9aa6bb;
  }

  .current::after {
    width: 15px;
    background: #f08f85;
  }

  .tray {
    display: flex;
    align-items: center;
    height: 45px;
    margin-left: auto;
  }

  .weather {
    position: relative;
    margin-right: 15px;
  }

  .badge {
    position: absolute;
    top: -5px;
    right: 0;
    width: 15px;
    border-radius: 8px;
    background: #fb8f9f;
    color: #222;
    line-height: 15px;
  }

  .w36 {
    width: 33px;
  }

  .w24 {
    width: 26px;
  }

  .lang {
    width: 46px;
  }

  .net {
    gap: 7px;
    width: 66px;
  }

  .clock {
    flex-direction: column;
    align-items: flex-end;
    width: 58px;
    line-height: 15px;
  }

  .bell {
    width: 30px;
    margin-right: 9px;
  }

  .callout {
    position: absolute;
    top: 328px;
    left: 413px;
    width: 780px;
    height: 302px;
  }

  .callout svg {
    position: absolute;
    width: 100%;
    height: 100%;
    overflow: visible;
  }

  .callout p {
    position: relative;
    margin: 0;
    padding: 14px 0 0 231px;
    color: #fff4f2;
    font-family: Montserrat, Inter, sans-serif;
    font-size: 36px;
    font-weight: 400;
    line-height: 44px;
    text-align: center;
  }

  strong {
    font-size: 44px;
    font-weight: 700;
    line-height: 54px;
  }
</style>
